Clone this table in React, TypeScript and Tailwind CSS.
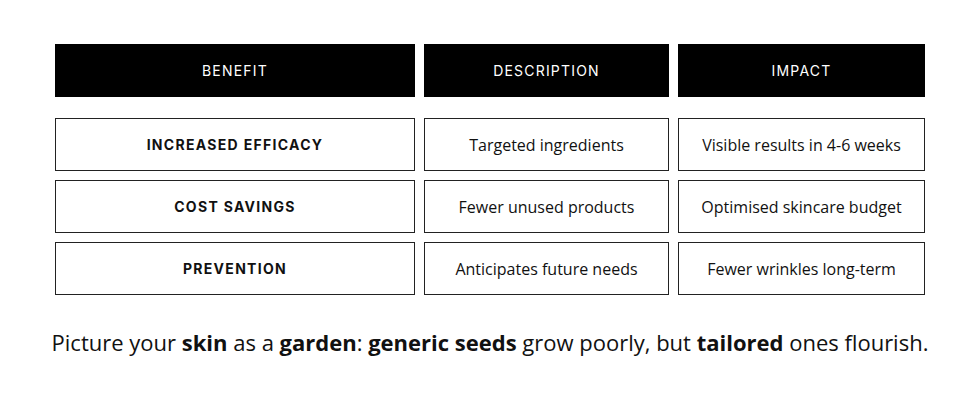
export default function App() {
  const rows = [
    ["INCREASED EFFICACY", "Targeted ingredients", "Visible results in 4-6 weeks"],
    ["COST SAVINGS", "Fewer unused products", "Optimised skincare budget"],
    ["PREVENTION", "Anticipates future needs", "Fewer wrinkles long-term"],
  ];
  return (
    <div className="w-[980px] h-[400px] bg-white overflow-hidden">
      <div className="pt-[44px] pl-[55px]">
        <div className="grid grid-cols-[360px_245px_247px] gap-x-[9px]">
          {["BENEFIT", "DESCRIPTION", "IMPACT"].map((h) => (
            <div
              key={h}
              className="h-[53px] bg-black text-white flex items-center justify-center text-[14px] tracking-[1.2px] font-['Inter',sans-serif]"
            >
              {h}
            </div>
          ))}
        </div>
        <div className="mt-[21px] grid grid-cols-[360px_245px_247px] gap-x-[9px] gap-y-[9px]">
          {rows.map((r) => (
            <>
              <div
                key={r[0]}
                className="h-[53px] border border-[#222] flex items-center justify-center text-[14px] font-bold tracking-[1.3px] text-[#111] font-['Inter',sans-serif]"
              >
                {r[0]}
              </div>
              <div className="h-[53px] border border-[#222] flex items-center justify-center text-[16px] text-[#111] font-['Open_Sans',sans-serif]">
                {r[1]}
              </div>
              <div className="h-[53px] border border-[#222] flex items-center justify-center text-[16px] text-[#111] font-['Open_Sans',sans-serif]">
                {r[2]}
              </div>
            </>
          ))}
        </div>
      </div>
      <p className="mt-[32px] text-center text-[22px] leading-[30px] text-[#111] font-['Open_Sans',sans-serif]">
        Picture your <b>skin</b> as a <b>garden</b>: <b>generic seeds</b> grow poorly, but <b>tailored</b> ones flourish.
      </p>
    </div>
  );
}
